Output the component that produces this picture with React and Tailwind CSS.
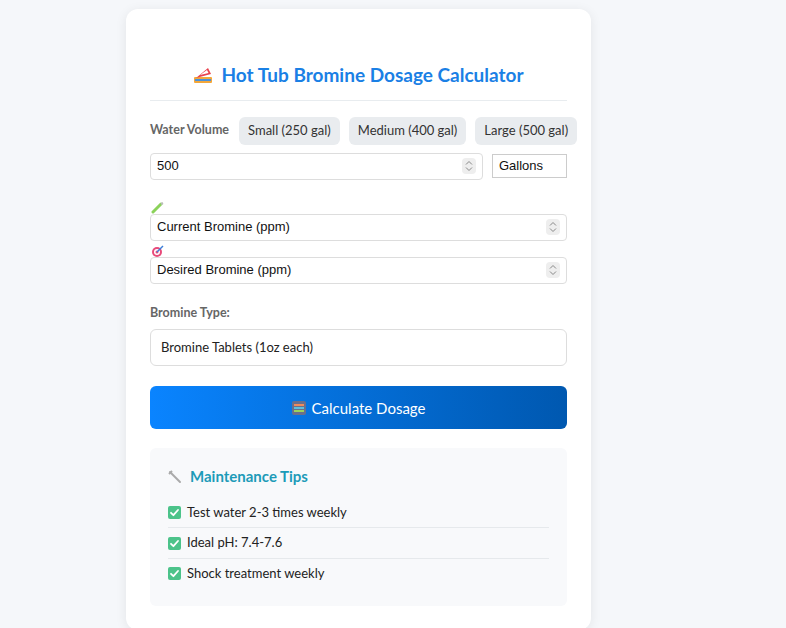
import React from "react";

const Check = () => (
  <svg width="13" height="13" viewBox="0 0 13 13" className="shrink-0">
    <rect width="13" height="13" rx="2" fill="#4cc38a" />
    <path d="M3 6.8 L5.4 9.2 L10 4" stroke="#fff" strokeWidth="1.8" fill="none" strokeLinecap="round" strokeLinejoin="round" />
  </svg>
);

const Spin = () => (
  <span className="flex flex-col items-center justify-center w-[14px] h-[16px] bg-[#eee] rounded-sm text-[#888]">
    <svg width="8" height="12" viewBox="0 0 8 12"><path d="M1 4.5 L4 1.5 L7 4.5 M1 7.5 L4 10.5 L7 7.5" stroke="#888" fill="none" strokeWidth="1"/></svg>
  </span>
);

export default function App() {
  return (
    <div className="min-h-[628px] bg-[#f5f7fa] pt-[9px] pb-[14px]" style={{ fontFamily: 'Lato,"Noto Sans",sans-serif' }}>
      <div className="ml-[126px] w-[465px] bg-white rounded-xl shadow-[0_2px_12px_rgba(0,0,0,0.08)] px-6 pt-[52px] pb-6">
        <div className="flex items-center justify-center gap-2 pb-[10px] border-b border-[#e8ecef]">
          <svg width="20" height="20" viewBox="0 0 20 20">
            <rect x="1" y="12" width="18" height="6" rx="1" fill="#f3a73b" />
            <path d="M3 13 L15 3 L18 9 Z" fill="#e8434e" />
            <path d="M7 10 L14 5 L15.5 8 Z" fill="#fff" />
            <rect x="2" y="14" width="16" height="2" fill="#4a90d9" />
          </svg>
          <h1 className="text-[19px] font-bold text-[#1a80e5]">Hot Tub Bromine Dosage Calculator</h1>
        </div>

        <div className="flex items-center gap-[9px] mt-4 whitespace-nowrap">
          <span className="text-[12.5px] font-bold text-[#666] mr-[1px]">Water Volume</span>
          <button className="h-[28px] px-[9px] rounded-md bg-[#e9ecef] text-[13px] text-[#333]">Small (250 gal)</button>
          <button className="h-[28px] px-[9px] rounded-md bg-[#e9ecef] text-[13px] text-[#333]">Medium (400 gal)</button>
          <button className="flex-1 h-[28px] px-[9px] rounded-md bg-[#e9ecef] text-[13px] text-[#333]">Large (500 gal)</button>
        </div>

        <div className="flex items-center gap-[9px] mt-[8px]" style={{ fontFamily: '"Liberation Sans",Arial,sans-serif' }}>
          <div className="flex-1 h-[27px] border border-[#ddd] rounded-sm flex items-center justify-between px-[6px] text-[13px] text-[#111]">
            <span>500</span><Spin />
          </div>
          <div className="w-[75px] h-[24px] border border-[#ccc] flex items-center px-[6px] text-[13px] text-[#111]">Gallons</div>
        </div>

        <div className="mt-[22px]" style={{ fontFamily: '"Liberation Sans",Arial,sans-serif' }}>
          <svg width="14" height="12" viewBox="0 0 14 12" className="ml-[1px] block">
            <path d="M2 10 L10 2" stroke="#8bd25a" strokeWidth="3" strokeLinecap="round" />
            <path d="M10 2 L12 1" stroke="#bbb" strokeWidth="2" />
          </svg>
          <div className="h-[27px] border border-[#ddd] rounded-sm flex items-center justify-between px-[6px] text-[13px] text-[#111]">
            <span>Current Bromine (ppm)</span><Spin />
          </div>
          <svg width="14" height="12" viewBox="0 0 14 12" className="ml-[1px] mt-[4px] block">
            <circle cx="6" cy="7" r="5" fill="#e84a7a" />
            <circle cx="6" cy="7" r="3" fill="#fff" />
            <circle cx="6" cy="7" r="1.5" fill="#e84a7a" />
            <path d="M6 7 L12 1" stroke="#3b7dd8" strokeWidth="1.5" />
          </svg>
          <div className="h-[27px] border border-[#ddd] rounded-sm flex items-center justify-between px-[6px] text-[13px] text-[#111]">
            <span>Desired Bromine (ppm)</span><Spin />
          </div>
        </div>

        <div className="mt-[20px] text-[12.5px] font-bold text-[#666]">Bromine Type:</div>
        <div className="mt-[7px] h-[37px] border border-[#ddd] rounded-md flex items-center px-[10px] text-[13px] text-[#222]">Bromine Tablets (1oz each)</div>

        <button className="mt-[20px] w-full h-[43px] rounded-md bg-gradient-to-r from-[#0a84ff] to-[#0058b0] text-white text-[15px] flex items-center justify-center gap-[6px]">
          <svg width="14" height="14" viewBox="0 0 14 14">
            <rect width="14" height="14" rx="2" fill="#6a6f8c" />
            <rect x="2" y="3" width="10" height="2" fill="#f08a5d" />
            <rect x="2" y="6" width="10" height="2" fill="#5bc0de" />
            <rect x="2" y="9" width="10" height="2" fill="#9bd35a" />
          </svg>
          Calculate Dosage
        </button>

        <div className="mt-[19px] bg-[#f8f9fb] rounded-md px-[18px] pt-[17px] pb-[18px]">
          <div className="flex items-center gap-[8px]">
            <svg width="14" height="14" viewBox="0 0 14 14"><path d="M2 2 L12 12" stroke="#aaa" strokeWidth="2" strokeLinecap="round"/><path d="M1 4 L4 1" stroke="#aaa" strokeWidth="2"/></svg>
            <h2 className="text-[15px] font-bold text-[#1d9bb8]">Maintenance Tips</h2>
          </div>
          <div className="mt-[10px] text-[13px] text-[#222]">
            <div className="flex items-center gap-[6px] py-[5px] border-b border-[#e6e9ec]"><Check />Test water 2-3 times weekly</div>
            <div className="flex items-center gap-[6px] py-[5px] border-b border-[#e6e9ec]"><Check />Ideal pH: 7.4-7.6</div>
            <div className="flex items-center gap-[6px] py-[5px]"><Check />Shock treatment weekly</div>
          </div>
        </div>
      </div>
    </div>
  );
}
